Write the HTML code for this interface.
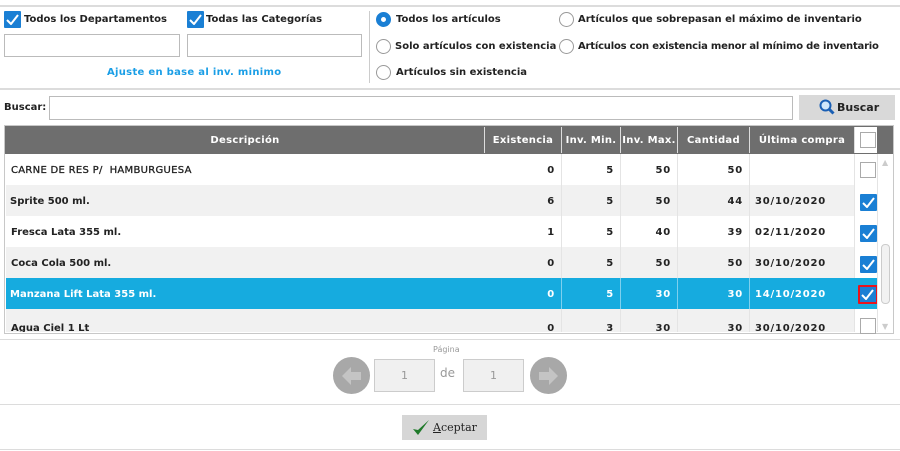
<!DOCTYPE html>
<html><head><meta charset="utf-8"><style>
*{box-sizing:border-box;margin:0;padding:0}
body{width:900px;height:451px;background:#fff;font-family:"DejaVu Sans","Liberation Sans",sans-serif;font-size:10px;color:#222;position:relative;overflow:hidden}
.a{position:absolute}
.hl{position:absolute;height:2px;background:#dcdcdc}
.cb{position:absolute;width:17px;height:17px;background:#1a7fd4;border-radius:1px}
.cb svg{position:absolute;left:2px;top:3px}
.ecb{position:absolute;width:16px;height:16px;border:1px solid #aaa;background:#fff}
.in{position:absolute;border:1px solid #bbb;background:#fff;height:23px}
.rad{position:absolute;width:15px;height:15px;border:1px solid #999;border-radius:50%;background:#fff}
.lbl{position:absolute;font-weight:bold;white-space:nowrap;letter-spacing:0}
.th{position:absolute;top:127px;height:26px;background:#6e6e6e;color:#fff;font-weight:bold;text-align:center;line-height:27px;border-right:1px solid #ddd;white-space:nowrap;letter-spacing:0.3px}
.row{position:absolute;left:6px;width:849px;height:31px;font-weight:bold;line-height:34px;white-space:nowrap}
.c{position:absolute;top:0;height:100%;border-right:1px solid #e4e4e4;text-align:right;padding-right:6px;letter-spacing:0.8px}
</style></head><body>
<div class="hl" style="left:0;top:5px;width:900px"></div>
<div class="cb" style="left:4px;top:11px"><svg width="13" height="11"><path d="M1 6 L5 10 L12 1" stroke="#fff" stroke-width="2" fill="none"/></svg></div>
<div class="lbl" style="left:24px;top:14px">Todos los Departamentos</div>
<div class="cb" style="left:187px;top:11px"><svg width="13" height="11"><path d="M1 6 L5 10 L12 1" stroke="#fff" stroke-width="2" fill="none"/></svg></div>
<div class="lbl" style="left:206px;top:14px">Todas las Categorías</div>
<div class="in" style="left:4px;top:34px;width:176px"></div>
<div class="in" style="left:187px;top:34px;width:175px"></div>
<div class="lbl" style="left:107px;top:67px;color:#1a9ee6;letter-spacing:0.3px">Ajuste en base al inv. minimo</div>
<div class="a" style="left:369px;top:11px;width:1px;height:72px;background:#ccc"></div>
<div class="rad" style="left:376px;top:12px;border:5px solid #1a7fd4"></div>
<div class="lbl" style="left:396px;top:14px">Todos los artículos</div>
<div class="rad" style="left:376px;top:39px"></div>
<div class="lbl" style="left:395px;top:41px">Solo artículos con existencia</div>
<div class="rad" style="left:376px;top:65px"></div>
<div class="lbl" style="left:396px;top:67px">Artículos sin existencia</div>
<div class="rad" style="left:559px;top:12px"></div>
<div class="lbl" style="left:578px;top:14px">Artículos que sobrepasan el máximo de inventario</div>
<div class="rad" style="left:559px;top:39px"></div>
<div class="lbl" style="left:578px;top:41px;letter-spacing:-0.2px">Artículos con existencia menor al mínimo de inventario</div>
<div class="hl" style="left:0;top:88px;width:900px"></div>
<div class="lbl" style="left:4px;top:102px">Buscar:</div>
<div class="in" style="left:49px;top:96px;width:744px;height:24px"></div>
<div class="a" style="left:799px;top:95px;width:96px;height:25px;background:#d9d9d9;font-weight:bold;line-height:25px;padding-left:38px;font-size:11px">Buscar</div>
<svg class="a" style="left:819px;top:99px" width="16" height="16"><circle cx="6.5" cy="6.5" r="5" stroke="#1a5fb4" stroke-width="2" fill="#cfe6fa"/><path d="M10 10 L14.5 14.5" stroke="#1a5fb4" stroke-width="3"/></svg>
<div class="a" style="left:4px;top:125px;width:890px;height:209px;border:1px solid #c8c8c8"></div>
<div class="a" style="left:5px;top:126px;width:888px;height:28px;background:#6e6e6e"></div>
<div class="th" style="left:6px;width:479px">Descripción</div>
<div class="th" style="left:485px;width:77px">Existencia</div>
<div class="th" style="left:562px;width:59px">Inv. Min.</div>
<div class="th" style="left:621px;width:57px">Inv. Max.</div>
<div class="th" style="left:678px;width:72px">Cantidad</div>
<div class="th" style="left:750px;width:105px">Última compra</div>
<div class="a" style="left:855px;top:127px;width:22px;height:26px;background:#fff"></div>
<div class="ecb" style="left:860px;top:132px"></div>

<div class="a" style="left:5px;top:154px;width:872px;height:178px;overflow:hidden">
<div class="row" style="top:0;left:1px;background:#fff"><span style="position:absolute;left:5px;font-weight:normal;-webkit-text-stroke:0.3px #222;letter-spacing:0.3px">CARNE DE RES P/&nbsp; HAMBURGUESA</span>
<div class="c" style="left:479px;width:77px">0</div><div class="c" style="left:556px;width:59px">5</div><div class="c" style="left:615px;width:57px">50</div><div class="c" style="left:672px;width:72px">50</div><div class="c" style="left:744px;width:105px;text-align:left;padding-left:5px"></div></div>
<div class="row" style="top:31px;left:1px;background:#f1f1f1"><span style="position:absolute;left:4px">Sprite 500 ml.</span>
<div class="c" style="left:479px;width:77px">6</div><div class="c" style="left:556px;width:59px">5</div><div class="c" style="left:615px;width:57px">50</div><div class="c" style="left:672px;width:72px">44</div><div class="c" style="left:744px;width:105px;text-align:left;padding-left:5px">30/10/2020</div></div>
<div class="row" style="top:62px;left:1px;background:#fff"><span style="position:absolute;left:5px">Fresca Lata 355 ml.</span>
<div class="c" style="left:479px;width:77px">1</div><div class="c" style="left:556px;width:59px">5</div><div class="c" style="left:615px;width:57px">40</div><div class="c" style="left:672px;width:72px">39</div><div class="c" style="left:744px;width:105px;text-align:left;padding-left:5px">02/11/2020</div></div>
<div class="row" style="top:93px;left:1px;background:#f1f1f1"><span style="position:absolute;left:5px">Coca Cola 500 ml.</span>
<div class="c" style="left:479px;width:77px">0</div><div class="c" style="left:556px;width:59px">5</div><div class="c" style="left:615px;width:57px">50</div><div class="c" style="left:672px;width:72px">50</div><div class="c" style="left:744px;width:105px;text-align:left;padding-left:5px">30/10/2020</div></div>
<div class="row" style="top:124px;left:1px;background:#16abdf;color:#fff"><span style="position:absolute;left:4px">Manzana Lift Lata 355 ml.</span>
<div class="c" style="left:479px;width:77px;border-color:#7fd0ee">0</div><div class="c" style="left:556px;width:59px;border-color:#7fd0ee">5</div><div class="c" style="left:615px;width:57px;border-color:#7fd0ee">30</div><div class="c" style="left:672px;width:72px;border-color:#7fd0ee">30</div><div class="c" style="left:744px;width:105px;text-align:left;padding-left:5px;border:0">14/10/2020</div></div>
<div class="row" style="top:155px;left:1px;background:#f1f1f1;line-height:40px"><span style="position:absolute;left:5px">Agua Ciel 1 Lt</span>
<div class="c" style="left:479px;width:77px">0</div><div class="c" style="left:556px;width:59px">3</div><div class="c" style="left:615px;width:57px">30</div><div class="c" style="left:672px;width:72px">30</div><div class="c" style="left:744px;width:105px;text-align:left;padding-left:5px">30/10/2020</div></div>
<div class="a" style="left:850px;top:0;width:22px;height:178px;background:#fff"></div>
<div class="a" style="left:850px;top:124px;width:22px;height:31px;background:#16abdf"></div>
</div>
<div class="ecb" style="left:860px;top:162px"></div>
<div class="cb" style="left:860px;top:194px"><svg width="13" height="11"><path d="M1 6 L5 10 L12 1" stroke="#fff" stroke-width="2" fill="none"/></svg></div>
<div class="cb" style="left:860px;top:225px"><svg width="13" height="11"><path d="M1 6 L5 10 L12 1" stroke="#fff" stroke-width="2" fill="none"/></svg></div>
<div class="cb" style="left:860px;top:256px"><svg width="13" height="11"><path d="M1 6 L5 10 L12 1" stroke="#fff" stroke-width="2" fill="none"/></svg></div>
<div class="cb" style="left:858px;top:285px;width:20px;height:19px;border:2px solid #e8141c"><svg width="13" height="11" style="left:1px;top:2px"><path d="M1 6 L5 10 L12 1" stroke="#fff" stroke-width="2" fill="none"/></svg></div>
<div class="ecb" style="left:860px;top:318px"></div>
<div class="a" style="left:877px;top:154px;width:16px;height:178px;background:#fff;border-left:1px solid #e4e4e4"></div>
<div class="a" style="left:882px;top:158px;color:#ccc;font-size:8px">▲</div>
<div class="a" style="left:882px;top:322px;color:#ccc;font-size:8px">▼</div>
<div class="a" style="left:881px;top:244px;width:9px;height:60px;border:1px solid #ccc;border-radius:4px;background:#f2f2f2"></div>
<div class="hl" style="left:0;top:339px;width:900px;height:1px"></div>
<div class="a" style="left:433px;top:345px;font-size:8px;color:#999">Página</div>
<div class="a" style="left:333px;top:357px;width:37px;height:37px;border-radius:50%;background:#a8a8a8"></div>
<svg class="a" style="left:340px;top:364px" width="24" height="24"><path d="M2 12 L11 3 L11 8 L21 8 L21 16 L11 16 L11 21 Z" fill="#c4c4c4"/></svg>
<div class="a" style="left:374px;top:359px;width:61px;height:33px;border:1px solid #ccc;background:#f0f0f0;color:#999;text-align:center;line-height:31px;font-size:11px">1</div>
<div class="a" style="left:440px;top:366px;color:#999;font-size:12px">de</div>
<div class="a" style="left:463px;top:359px;width:61px;height:33px;border:1px solid #ccc;background:#f0f0f0;color:#999;text-align:center;line-height:31px;font-size:11px">1</div>
<div class="a" style="left:530px;top:357px;width:37px;height:37px;border-radius:50%;background:#a8a8a8"></div>
<svg class="a" style="left:536px;top:364px" width="24" height="24"><path d="M22 12 L13 3 L13 8 L3 8 L3 16 L13 16 L13 21 Z" fill="#c4c4c4"/></svg>
<div class="hl" style="left:0;top:404px;width:900px;height:1px"></div>
<div class="a" style="left:402px;top:415px;width:85px;height:25px;background:#d6d6d6;font-family:'DejaVu Serif','Liberation Serif',serif;font-size:11px;line-height:25px;padding-left:31px"><u>A</u>ceptar</div>
<svg class="a" style="left:412px;top:419px" width="18" height="18"><path d="M1 10 L6 16 L17 1 L6 11 Z" fill="#1f7a2a"/></svg>
<div class="hl" style="left:0;top:449px;width:900px;height:1px"></div>
</body></html>
